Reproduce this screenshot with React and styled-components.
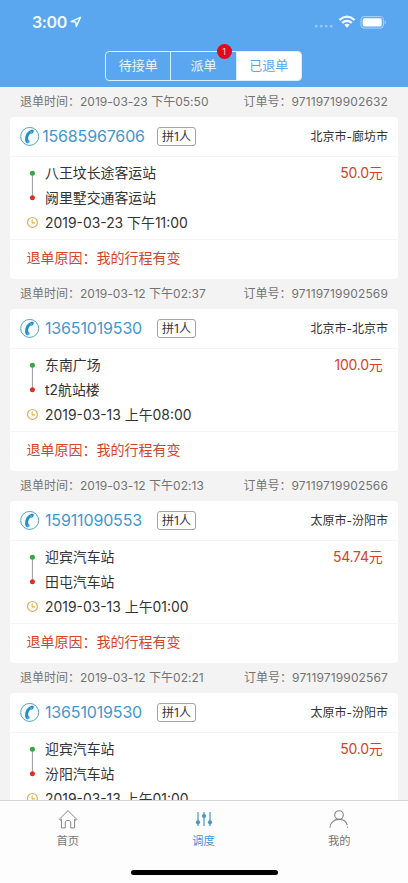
import React from "react";
import styled, { createGlobalStyle } from "styled-components";

const BLUE = "#5aa7f0";
const LINK = "#4595cf";
const RED = "#d2452b";

const GlobalStyle = createGlobalStyle`
  * { box-sizing: border-box; }
  body {
    margin: 0;
    overflow: hidden;
    font-family: Inter, "Noto Sans CJK SC", sans-serif;
    color: #333;
    background: #fff;
  }
`;

const Screen = styled.div`
  width: 408px;
  height: 883px;
  display: flex;
  flex-direction: column;
  overflow: hidden;
  background: #f3f3f3;
`;

const Header = styled.header`
  flex: none;
  height: 87px;
  background: ${BLUE};
  display: flex;
  flex-direction: column;
  align-items: center;
`;

const StatusBar = styled.div`
  width: 100%;
  height: 51px;
  padding: 9px 22px 0 32px;
  display: flex;
  align-items: flex-start;
  justify-content: space-between;
`;

const Clock = styled.div`
  display: flex;
  align-items: center;
  gap: 3px;
  height: 26px;
  font-size: 16px;
  font-weight: 600;
  letter-spacing: -0.4px;
  color: #f2fbff;
`;

const StatusIcons = styled.div`
  display: flex;
  align-items: center;
  height: 26px;
`;

const Segments = styled.nav`
  width: 197px;
  height: 30px;
  margin-right: 1px;
  display: flex;
  border: 1px solid #d3f1fd;
  border-radius: 4px;
`;

const Segment = styled.div`
  position: relative;
  flex: 1;
  display: flex;
  align-items: center;
  justify-content: center;
  font-size: 13px;
  line-height: 27px;
  padding-bottom: 1px;
  color: ${(p) => (p.$active ? BLUE : "#e6f7ff")};
  background: ${(p) => (p.$active ? "#fff" : "transparent")};
  border-radius: ${(p) => (p.$active ? "0 3px 3px 0" : "0")};
  & + & { border-left: 1px solid #d3f1fd; }
`;

const Badge = styled.span`
  position: absolute;
  top: -8px;
  right: 4px;
  width: 15px;
  height: 15px;
  border-radius: 50%;
  background: #e10a17;
  color: #ffc8cc;
  font-size: 9px;
  line-height: 15px;
  text-align: center;
`;

const OrderList = styled.main`
  flex: 1;
  min-height: 0;
  overflow: hidden;
`;

const Meta = styled.div`
  height: 30px;
  padding: 0 20px 0 20px;
  display: flex;
  align-items: center;
  justify-content: space-between;
  font-size: 12px;
  line-height: 30px;
  color: #737373;
`;

const Spaced = styled.span`
  letter-spacing: ${(p) => p.$by}px;
  white-space: pre;
`;

const Card = styled.article`
  height: 162px;
  margin: 0 10px;
  background: #fff;
  border-radius: 4px;
`;

const CardHead = styled.div`
  height: 40px;
  padding: 0 10px;
  display: flex;
  align-items: center;
  border-bottom: 1px solid #f4f4f4;
`;

const Phone = styled.span`
  width: 107px;
  text-align: center;
  font-size: 16px;
  line-height: 37px;
  padding-bottom: 1px;
  letter-spacing: -0.15px;
  color: ${LINK};
`;

const Riders = styled.span`
  width: 39px;
  height: 19px;
  margin-left: 10px;
  border: 1px solid #a4a4a4;
  border-radius: 3px;
  font-size: 12px;
  line-height: 17px;
  text-align: center;
`;

const Route = styled.span`
  margin-left: auto;
  font-size: 12px;
  line-height: 38px;
`;

const Trip = styled.div`
  height: 83px;
  padding: 4px 15.5px 0 17px;
  display: flex;
  justify-content: space-between;
  border-bottom: 1px solid #f4f4f4;
`;

const TripLeft = styled.div`
  display: flex;
  gap: 7px;
`;

const Lines = styled.div`
  font-size: 13.9px;
  line-height: 25px;
`;

const Line = styled.div`
  height: 24.8px;
  white-space: pre;
`;

const Price = styled.span`
  font-size: 14px;
  line-height: 24.7px;
  letter-spacing: -0.25px;
  color: ${RED};
`;

const Reason = styled.div`
  height: 39px;
  padding-left: 16.5px;
  font-size: 14px;
  line-height: 35px;
  color: ${RED};
`;

const TabBar = styled.footer`
  flex: none;
  height: 83px;
  border-top: 1px solid #d6d6d6;
  background: #fdfdfd;
  display: flex;
  flex-direction: column;
  align-items: center;
`;

const Tabs = styled.div`
  width: 407px;
  margin-right: 1px;
  height: 68px;
  display: flex;
`;

const Tab = styled.div`
  flex: 1;
  padding-top: 8px;
  display: flex;
  flex-direction: column;
  align-items: center;
  font-size: 11.3px;
  line-height: 20px;
  color: ${(p) => (p.$active ? LINK : "#777")};
  svg { display: block; margin-bottom: 2px; }
`;

const HomeIndicator = styled.div`
  width: 147px;
  height: 5px;
  margin-top: 1px;
  border-radius: 3px;
  background: #000;
`;

const LocationArrow = () => (
  <svg width="12" height="12" viewBox="0 0 12 12" fill="none" stroke="#e9faff" strokeWidth="1.5" strokeLinejoin="round">
    <path d="M1.2 5.6 10.4 1.4 6.3 10.4 5.7 6.1Z" />
  </svg>
);

const Signals = () => (
  <svg width="72" height="16" viewBox="0 0 72 16">
    <g fill="#94c9f5">
      <circle cx="2.2" cy="12.2" r="1.4" />
      <circle cx="7.2" cy="12.2" r="1.4" />
      <circle cx="12.2" cy="12.2" r="1.4" />
      <circle cx="17.2" cy="12.2" r="1.4" />
    </g>
    <g fill="none" stroke="#f4fcff" strokeWidth="2.2">
      <path d="M25.4 6Q33 -.6 40.6 6" />
      <path d="M28.2 8.9Q33 4.7 37.8 8.9" />
    </g>
    <path d="M30.3 10.8Q33 8.5 35.7 10.8L33 13.8Z" fill="#f4fcff" />
    <rect x="47" y="2.6" width="22.4" height="11.5" rx="3" fill="none" stroke="#a8d3f8" />
    <rect x="48.7" y="4.2" width="19" height="8.3" rx="1.6" fill="#fff" />
    <path d="M70.6 6.4v4q1.2-.6 1.2-2T70.6 6.4Z" fill="#a8d3f8" />
  </svg>
);

const PhoneIcon = () => (
  <svg width="20" height="20" viewBox="0 0 20 20">
    <circle cx="9.7" cy="9.4" r="9" fill="#f5fcfe" stroke="#58a5ca" strokeWidth="1" />
    <path
      d="M10.3 3.2C7 4.8 5 8.1 5.1 12c.1 2.5.6 4 1.9 4.2 1.1.1 2.3-.6 2.6-1.5.2-.8-.5-1.6-1.3-1.8-.5-2.3.2-4.7 1.9-6.4 1.1.5 2 .4 2.7-.4.9-1 1.2-2.2.5-2.9-.6-.5-2-.5-3.1 0Z"
      fill="#258fc5"
    />
    <path d="M10.4 3.5l1.3 2.6M6.7 15.6l2-1.6" stroke="#bfe2f2" strokeWidth=".5" />
  </svg>
);

const RouteMarks = () => (
  <svg width="11" height="75" viewBox="0 0 11 75" fill="none">
    <path d="M5.4 12.5V36.7" stroke="#999" />
    <circle cx="5.4" cy="12.2" r="2.5" fill="#3ea345" />
    <circle cx="5.4" cy="36.8" r="2.5" fill="#cf3528" />
    <circle cx="5.4" cy="61.4" r="4.9" stroke="#e0ae58" strokeWidth="1.2" />
    <path d="M5.1 58.4v3.5h3" stroke="#e0ae58" strokeWidth="1.1" />
  </svg>
);

const HomeIcon = () => (
  <svg width="20" height="20" viewBox="0 0 20 20" fill="none" stroke="#858585" strokeWidth="1" strokeLinejoin="round">
    <path d="M1.2 10.4 10 1.6l8.8 8.8-.8.9-1.4-1.2v8.8h-3.9v-6.2l-1.4-1.2H8.7l-1.4 1.2v6.2H3.4v-8.8L2 11.3Z" />
  </svg>
);

const DispatchIcon = () => (
  <svg width="20" height="20" viewBox="0 0 20 20" stroke={LINK} fill={LINK}>
    <path d="M4 3v14M10 3v14M16 3v14" strokeWidth="1.2" />
    <g stroke="none">
      <circle cx="4" cy="13.3" r="2.1" />
      <circle cx="10" cy="7" r="2.1" />
      <circle cx="16" cy="13.3" r="2.1" />
    </g>
  </svg>
);

const UserIcon = () => (
  <svg width="20" height="20" viewBox="0 0 20 20" fill="none" stroke="#858585" strokeWidth="1.1">
    <circle cx="10" cy="6" r="4.3" />
    <path d="M1 18.8C1.2 13.5 5 10.4 10 10.4c4.3 0 7.3 2.1 8.3 5.7M18 18.2h1.2" />
  </svg>
);

const REASON = "我的行程有变";

const ORDERS = [
  { time: "2019-03-23 下午05:50", id: "97119719902632", phone: "15685967606", route: "北京市-廊坊市", from: "八王坟长途客运站", to: "阙里墅交通客运站", depart: "2019-03-23 下午11:00", price: "50.0元", reason: REASON },
  { time: "2019-03-12 下午02:37", id: "97119719902569", phone: "13651019530", route: "北京市-北京市", from: "东南广场", to: "t2航站楼", depart: "2019-03-13 上午08:00", price: "100.0元", reason: REASON },
  { time: "2019-03-12 下午02:13", id: "97119719902566", phone: "15911090553", route: "太原市-汾阳市", from: "迎宾汽车站", to: "田屯汽车站", depart: "2019-03-13 上午01:00", price: "54.74元", reason: REASON },
  { time: "2019-03-12 下午02:21", id: "97119719902567", phone: "13651019530", route: "太原市-汾阳市", from: "迎宾汽车站", to: "汾阳汽车站", depart: "2019-03-13 上午01:00", price: "50.0元" },
];

const Order = ({ order }) => (
  <section>
    <Meta>
      <span>退单时间：<Spaced $by={0.02}>{order.time}</Spaced></span>
      <span>订单号：<Spaced $by={0.14}>{order.id}</Spaced></span>
    </Meta>
    <Card>
      <CardHead>
        <PhoneIcon />
        <Phone>{order.phone}</Phone>
        <Riders>拼1人</Riders>
        <Route>{order.route}</Route>
      </CardHead>
      <Trip>
        <TripLeft>
          <RouteMarks />
          <Lines>
            <Line>{order.from}</Line>
            <Line>{order.to}</Line>
            <Line>{order.depart}</Line>
          </Lines>
        </TripLeft>
        <Price>{order.price}</Price>
      </Trip>
      {order.reason && <Reason>退单原因：{order.reason}</Reason>}
    </Card>
  </section>
);

export default function App() {
  return (
    <Screen>
      <GlobalStyle />
      <Header>
        <StatusBar>
          <Clock>3:00<LocationArrow /></Clock>
          <StatusIcons><Signals /></StatusIcons>
        </StatusBar>
        <Segments>
          <Segment>待接单</Segment>
          <Segment>派单<Badge>1</Badge></Segment>
          <Segment $active>已退单</Segment>
        </Segments>
      </Header>
      <OrderList>
        {ORDERS.map((order) => <Order key={order.id} order={order} />)}
      </OrderList>
      <TabBar>
        <Tabs>
          <Tab><HomeIcon />首页</Tab>
          <Tab $active><DispatchIcon />调度</Tab>
          <Tab><UserIcon />我的</Tab>
        </Tabs>
        <HomeIndicator />
      </TabBar>
    </Screen>
  );
}
